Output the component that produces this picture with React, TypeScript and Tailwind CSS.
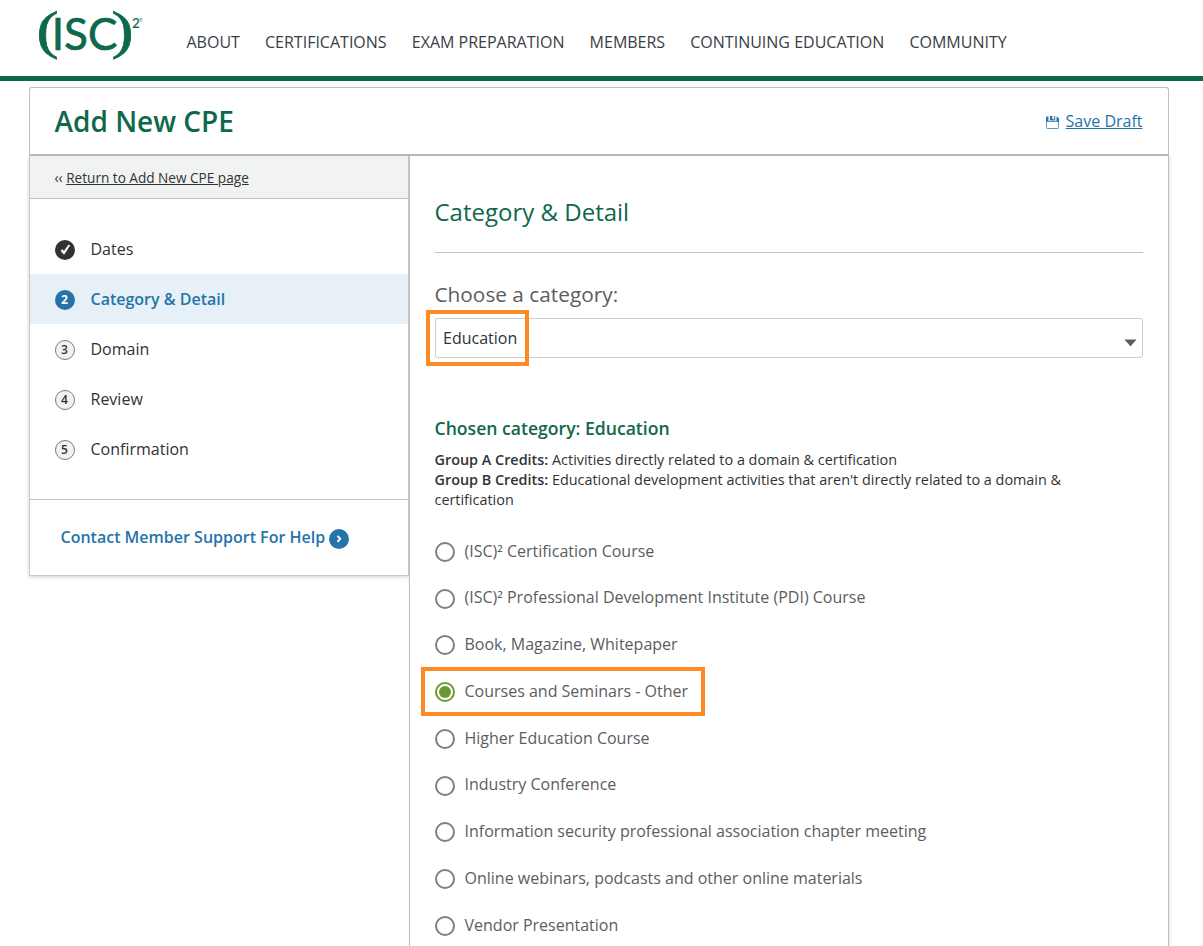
import React from "react";

const NAV = ["ABOUT", "CERTIFICATIONS", "EXAM PREPARATION", "MEMBERS", "CONTINUING EDUCATION", "COMMUNITY"];

const STEPS = ["Dates", "Category & Detail", "Domain", "Review", "Confirmation"];

const OPTIONS = [
  "(ISC)² Certification Course",
  "(ISC)² Professional Development Institute (PDI) Course",
  "Book, Magazine, Whitepaper",
  "Courses and Seminars - Other",
  "Higher Education Course",
  "Industry Conference",
  "Information security professional association chapter meeting",
  "Online webinars, podcasts and other online materials",
  "Vendor Presentation",
];

function Logo() {
  return (
    <svg className="shrink-0 overflow-visible" width="110" height="74" viewBox="38 0 110 74" fill="#0f684b" fontFamily="Lato, sans-serif">
      <text transform="translate(36.4 47.9) scale(1.24 1)" fontSize="53.5" fontFamily="Liberation Serif, serif" stroke="#0f684b" strokeWidth="0.7">(</text>
      <text x="51.8" y="50.4" fontSize="45" textLength="65.6" lengthAdjust="spacingAndGlyphs" stroke="#0f684b" strokeWidth="0.7">ISC</text>
      <text transform="translate(111.5 47.9) scale(1.24 1)" fontSize="53.5" fontFamily="Liberation Serif, serif" stroke="#0f684b" strokeWidth="0.7">)</text>
      <text x="131.9" y="27.6" fontSize="13.5" stroke="#0f684b" strokeWidth="0.2">2</text>
      <text x="139" y="22" fontSize="5" fillOpacity=".8">®</text>
    </svg>
  );
}

function SaveIcon() {
  return (
    <svg className="mt-0.5" width="13" height="13" viewBox="0 0 13 13" fill="none" stroke="#2574a9">
      <path d="M.5 1v10.5q0 1 1 1h10q1 0 1-1V2" strokeWidth="1" strokeOpacity=".75" />
      <path d="M.5 5.5h12" strokeWidth="1" strokeOpacity=".75" />
      <path d="M.3.5h2.2v4.8H.3zM4 0h2.4v3.3h1.8V0h1v4.4H4zM10.5.4L12.8 2v3.4h-2.3z" fill="#2574a9" stroke="none" />
    </svg>
  );
}

function StepMark({ index }: { index: number }) {
  if (index === 0) {
    return (
      <svg className="mt-0.5" width="20" height="20" viewBox="0 0 20 20">
        <circle cx="10" cy="10" r="10" fill="#303335" />
        <path d="M5.6 10.6l2-1.3 1.3 1.8 4.5-6.3 1.8.4-5.7 9.1h-1.1z" fill="#fff" />
      </svg>
    );
  }
  return (
    <span
      className={
        index === 1
          ? "mt-0.5 flex size-5 items-center justify-center rounded-full bg-[#2574a9] pr-px text-xs font-bold text-white"
          : "mt-0.5 flex size-5 items-center justify-center rounded-full border border-[#777b7e] bg-[#f1f3f2] pr-px text-xs font-semibold text-[#303335]"
      }
    >
      {index + 1}
    </span>
  );
}

function Radio({ checked }: { checked: boolean }) {
  return (
    <span
      className={
        checked
          ? "mt-[3.25px] flex size-5 items-center justify-center rounded-full border-2 border-[#6a9a35] bg-white"
          : "mt-[3.25px] size-5 rounded-full border-2 border-[#7b8084] bg-white"
      }
    >
      {checked && <span className="size-3 rounded-full bg-[#6a9a35]" />}
    </span>
  );
}

function OptionLabel({ text }: { text: string }) {
  const [before, after] = text.split("²");
  return (
    <span className="leading-[24px]">
      {before}
      {after !== undefined && (
        <>
          <span className="relative top-[2px]">²</span>
          {after}
        </>
      )}
    </span>
  );
}

export default function App() {
  return (
    <div className="flex h-[946px] w-[1203px] flex-col overflow-hidden bg-white font-['Open_Sans',sans-serif] text-base text-[#303335]">
      <header className="flex h-[81px] shrink-0 border-b-[5px] border-[#0f684b] pl-[38px]">
        <Logo />
        <nav className="mt-1.5 ml-[38.5px] flex h-[72px] items-center gap-[25.15px] whitespace-nowrap text-[#393e47]">
          {NAV.map((item) => (
            <a key={item}>{item}</a>
          ))}
        </nav>
      </header>

      <div className="mt-1.5 ml-[29px] flex h-[69px] w-[1140px] shrink-0 items-center justify-between rounded-t-[3px] border border-b-2 border-[#bfbfbf] pr-[25.5px] pl-[24.5px]">
        <h1 className="text-[28px] font-semibold text-[#0f684b]">Add New CPE</h1>
        <a className="flex items-center gap-[7px] text-[#2574a9]">
          <SaveIcon />
          <span className="underline">Save Draft</span>
        </a>
      </div>

      <div className="ml-[29px] flex min-h-0 w-[1140px] flex-1 items-stretch">
        <aside className="h-[420px] w-[380px] shrink-0 border-x border-b border-[#c8c8c8] shadow-[0_1px_4px_rgba(0,0,0,0.18)]">
          <div className="flex h-[43px] items-center border-b border-[#c0c0c0] bg-[#f1f3f2] pt-[2px] pl-[24.5px] text-[13.6px]">
            <span className="mr-[3.5px]">‹‹</span>
            <a className="underline">Return to Add New CPE page</a>
          </div>
          <ol className="h-[301px] border-b border-[#c0c0c0] pt-[25px]">
            {STEPS.map((step, i) => (
              <li
                key={step}
                className={
                  i === 1
                    ? "flex h-[50px] items-center gap-[15.5px] bg-[#e7f0f6] pl-[25px] font-semibold text-[#2574a9]"
                    : "flex h-[50px] items-center gap-[15.5px] pl-[25px]"
                }
              >
                <StepMark index={i} />
                <span>{step}</span>
              </li>
            ))}
          </ol>
          <a className="flex h-[74px] items-center gap-[3.5px] pl-[30.5px] font-semibold text-[#2574a9]">
            Contact Member Support For Help
            <svg className="mt-[3px]" width="20" height="20" viewBox="0 0 20 20">
              <circle cx="10" cy="10" r="10" fill="#2574a9" />
              <path d="M8.5 6.8l2.7 3-2.7 3" fill="none" stroke="#fff" strokeWidth="1.9" />
            </svg>
          </a>
        </aside>

        <main className="relative z-10 w-[760px] shrink-0 border-x border-[#bfbfbf] bg-white pt-[38px] pr-[25px] pl-[25px] shadow-[1px_0_3px_rgba(0,0,0,0.12)]">
          <h2 className="h-[59px] border-b border-[#c0c0c0] text-2xl leading-[36px] text-[#0f684b]">
            <span className="-ml-[0.5px]">Category &amp; Detail</span>
          </h2>
          <p className="mt-[25px] -ml-[0.5px] text-[20.8px] leading-8 text-[#5b5d5f]">Choose a category:</p>
          <div className="relative mt-2 flex h-10 items-center justify-between rounded-[3px] border border-[#ccc] pr-[5px] pl-[7px]">
            <span>Education</span>
            <svg className="mt-[9px]" width="13" height="8" viewBox="0 0 13 8">
              <path d="M1 1h11L6.5 7.6z" fill="#5b5d5f" />
              <path d="M1 1h11" stroke="#5b5d5f" />
            </svg>
            <span className="absolute -top-[9px] -left-[10px] h-14 w-[103px] border-4 border-[#fd8a25]" />
          </div>

          <h3 className="mt-[57px] -ml-[0.5px] text-[17.6px] leading-[26px] font-semibold text-[#0f684b]">Chosen category: Education</h3>
          <p className="mt-[9px] -ml-[0.5px] text-[14.4px] leading-5">
            <b className="font-semibold">Group A Credits:</b> Activities directly related to a domain &amp; certification
            <br />
            <b className="font-semibold">Group B Credits:</b> Educational development activities that aren't directly related to a domain &amp;
            <br />
            certification
          </p>
          <ul className="mt-[28.6px] text-[#5b5d5f]">
            {OPTIONS.map((option, i) => (
              <li key={option} className="relative flex h-[46.77px] items-start gap-[9.5px]">
                <Radio checked={i === 3} />
                <OptionLabel text={option} />
                {i === 3 && (
                  <span className="absolute -top-[12px] -left-[14px] h-[49px] w-[284px] border-4 border-[#fd8a25]" />
                )}
              </li>
            ))}
          </ul>
        </main>
      </div>
    </div>
  );
}
